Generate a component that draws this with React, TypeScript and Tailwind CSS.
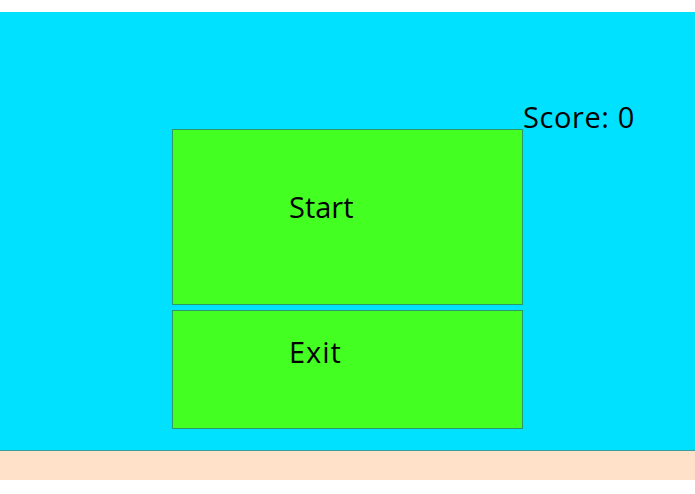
import React from "react";

const font = { fontFamily: '"Open Sans", "Noto Sans", sans-serif' };

const App = () => {
  return (
    <div className="w-full h-[494px] bg-white text-black" style={font}>
      <div className="h-[12px] bg-white"></div>

      {/* Game area */}
      <div className="h-[439px] bg-[#00e1ff] border-b border-[#3a9e9e] pt-[90px]">
        <div className="h-[27px] pl-[523px] text-[29px] leading-[29px] tracking-[0.6px] whitespace-nowrap">
          Score: 0
        </div>

        <div className="ml-[172px] w-[351px] flex flex-col gap-[5px]">
          <button className="h-[176px] bg-[#44ff22] border border-[#2a9a6a] text-left pl-[116px] pt-[62px] flex items-start text-[29px] leading-[29px]">
            Start
          </button>
          <button className="h-[119px] bg-[#44ff22] border border-[#2a9a6a] text-left pl-[116px] pt-[26px] flex items-start text-[29px] leading-[29px] tracking-[1px]">
            Exit
          </button>
        </div>
      </div>

      {/* Footer strip */}
      <div className="h-[29px] bg-[#ffe0c8]"></div>
    </div>
  );
};

export default App;
